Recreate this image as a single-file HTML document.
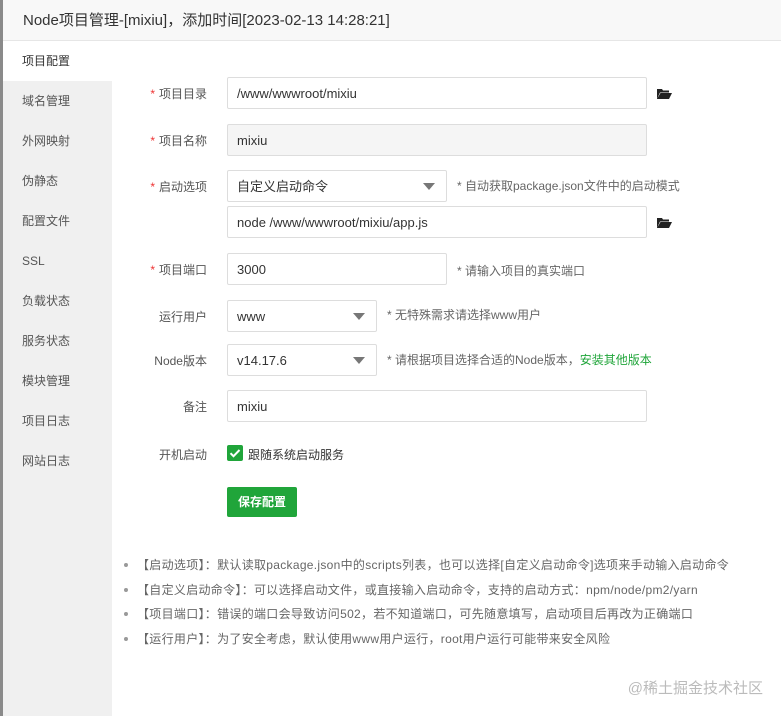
<!DOCTYPE html>
<html><head><meta charset="utf-8"><style>
*{box-sizing:border-box;margin:0;padding:0}
body{width:781px;height:716px;overflow:hidden;background:#fff;font-family:"Liberation Sans","Noto Sans CJK SC",sans-serif;font-size:13px;color:#555;position:relative}
.title{position:absolute;left:3px;top:0;width:778px;height:41px;background:#f8f8f8;border-bottom:1px solid #e6e6e6;font-size:15px;color:#333;line-height:41px;padding-left:20px}
.lb{position:absolute;left:0;top:0;width:3px;height:716px;background:#8a8a8a}
.side{position:absolute;left:3px;top:41px;width:109px;height:675px;background:#f0f0f0}
.side div{height:40px;line-height:40px;padding-left:19px;color:#555;font-size:12px}
.side div.a{background:#fff;color:#333}
.lab{position:absolute;width:100px;left:107px;text-align:right;color:#555;font-size:12px}
.lab i{color:#e33;font-style:normal;margin-right:4px}
.in{position:absolute;left:227px;height:32px;border:1px solid #ddd;border-radius:2px;padding-left:9px;line-height:32px;color:#333;background:#fff}
.gr{background:#f5f5f5}
.sel::after{content:"";position:absolute;right:11px;top:12px;border:6px solid transparent;border-top:7px solid #777}
.tip{position:absolute;color:#666;font-size:12px}
.fold{position:absolute;left:657px;width:15px;height:11px}
.notes{position:absolute;left:120px;top:555px;font-size:12px;color:#666;letter-spacing:0.3px}
.notes div{height:24.5px;line-height:20px;position:relative;padding-left:17px}
.notes div::before{content:"";position:absolute;left:4px;top:8px;width:4px;height:4px;border-radius:50%;background:#999}
</style></head><body>
<div class="lb"></div>
<div class="title">Node项目管理-[mixiu]，添加时间[2023-02-13 14:28:21]</div>
<div class="side"><div class="a">项目配置</div><div>域名管理</div><div>外网映射</div><div>伪静态</div><div>配置文件</div><div>SSL</div><div>负载状态</div><div>服务状态</div><div>模块管理</div><div>项目日志</div><div>网站日志</div></div>

<div class="lab" style="top:85px"><i>*</i>项目目录</div>
<div class="in" style="top:77px;width:420px">/www/wwwroot/mixiu</div>
<svg class="fold" style="top:88px" viewBox="0 0 15 11"><path d="M0 1h5l1 1.5h6v2H3L0 11z M3.5 5H15L12 11H0z" fill="#222"/></svg>

<div class="lab" style="top:132px"><i>*</i>项目名称</div>
<div class="in gr" style="top:124px;width:420px">mixiu</div>

<div class="lab" style="top:178px"><i>*</i>启动选项</div>
<div class="in sel" style="top:170px;width:220px">自定义启动命令</div>
<div class="tip" style="left:457px;top:177px">* 自动获取package.json文件中的启动模式</div>
<div class="in" style="top:206px;width:420px">node /www/wwwroot/mixiu/app.js</div>
<svg class="fold" style="top:217px" viewBox="0 0 15 11"><path d="M0 1h5l1 1.5h6v2H3L0 11z M3.5 5H15L12 11H0z" fill="#222"/></svg>

<div class="lab" style="top:261px"><i>*</i>项目端口</div>
<div class="in" style="top:253px;width:220px">3000</div>
<div class="tip" style="left:457px;top:262px">* 请输入项目的真实端口</div>

<div class="lab" style="top:308px">运行用户</div>
<div class="in sel" style="top:300px;width:150px">www</div>
<div class="tip" style="left:387px;top:306px">* 无特殊需求请选择www用户</div>

<div class="lab" style="top:352px">Node版本</div>
<div class="in sel" style="top:344px;width:150px">v14.17.6</div>
<div class="tip" style="left:387px;top:351px">* 请根据项目选择合适的Node版本，<span style="color:#20a53a">安装其他版本</span></div>

<div class="lab" style="top:398px">备注</div>
<div class="in" style="top:390px;width:420px">mixiu</div>

<div class="lab" style="top:446px">开机启动</div>
<div style="position:absolute;left:227px;top:445px;width:16px;height:16px;background:#20a53a;border-radius:2px"><svg width="16" height="16" viewBox="0 0 16 16"><path d="M3.5 8.2l3 3 6-6.2" stroke="#fff" stroke-width="2" fill="none"/></svg></div>
<div style="position:absolute;left:248px;top:446px;color:#333;font-size:12px">跟随系统启动服务</div>

<div style="position:absolute;left:227px;top:487px;width:70px;height:30px;background:#20a53a;border-radius:2px;color:#fff;font-size:12px;font-weight:bold;text-align:center;line-height:30px">保存配置</div>

<div class="notes">
<div>【启动选项】：默认读取package.json中的scripts列表，也可以选择[自定义启动命令]选项来手动输入启动命令</div>
<div>【自定义启动命令】：可以选择启动文件，或直接输入启动命令，支持的启动方式：npm/node/pm2/yarn</div>
<div>【项目端口】：错误的端口会导致访问502，若不知道端口，可先随意填写，启动项目后再改为正确端口</div>
<div>【运行用户】：为了安全考虑，默认使用www用户运行，root用户运行可能带来安全风险</div>
</div>
<div style="position:absolute;right:18px;top:677px;font-size:15px;color:#bbb">@稀土掘金技术社区</div>
</body></html>
